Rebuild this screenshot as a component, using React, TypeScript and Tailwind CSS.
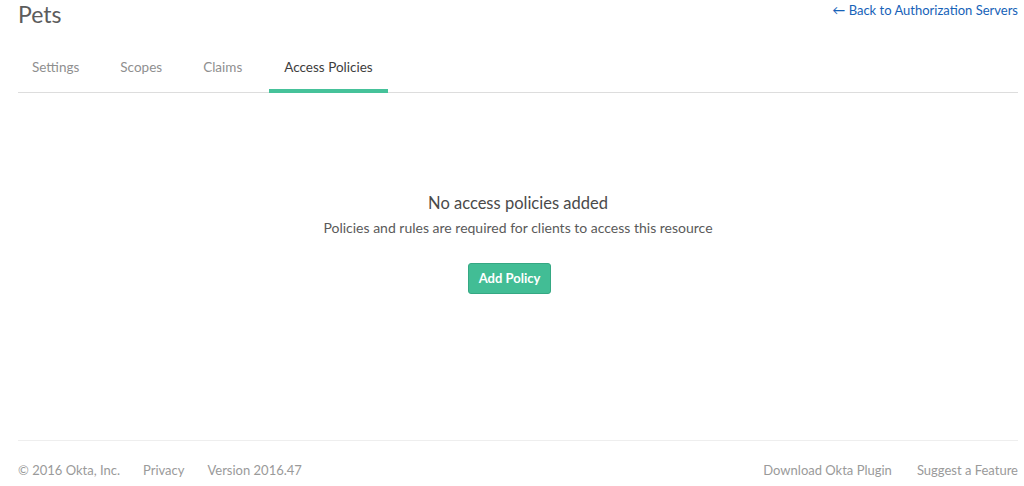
import React from 'react';

const tabs = ['Settings', 'Scopes', 'Claims', 'Access Policies'];

const App: React.FC = () => {
  const active = 'Access Policies';

  return (
    <div className="bg-white pl-[18px] pr-[6px] font-['Lato','Open_Sans',sans-serif] flex flex-col h-[486px]">
      {/* Header */}
      <div className="flex items-start justify-between">
        <h1 className="text-[23px] leading-[30px] text-[#5c5c5c] font-normal -mt-[1px]">Pets</h1>
        <a href="#" className="text-[13px] leading-5 text-[#1662b8]">
          ← Back to Authorization Servers
        </a>
      </div>

      {/* Tabs */}
      <div className="mt-[20px] flex gap-[13px] border-b border-[#dddddd]">
        {tabs.map((tab) => (
          <div
            key={tab}
            className={
              tab === active
                ? 'px-[15px] pt-[8px] pb-[12px] text-[13.5px] leading-5 text-[#3d3d3d] border-b-4 border-[#46c29a] -mb-[1px]'
                : 'px-[14px] pt-[8px] pb-[12px] text-[13.5px] leading-5 text-[#8f8f8f] border-b-4 border-transparent -mb-[1px]'
            }
          >
            {tab}
          </div>
        ))}
      </div>

      {/* Empty state */}
      <div className="flex-1 flex flex-col items-center pt-[98px]">
        <h2 className="text-[16.5px] leading-6 text-[#4a4a4a]">No access policies added</h2>
        <p className="mt-[3px] text-[14px] leading-5 text-[#5a5a5a]">
          Policies and rules are required for clients to access this resource
        </p>
        <button className="mt-[25px] mr-[17px] h-[31px] w-[83px] rounded-[3px] bg-[#42bd95] border border-[#35a883] text-white text-[13px] font-bold">
          Add Policy
        </button>
      </div>

      {/* Footer */}
      <footer className="border-t border-[#eeeeee] h-[46px] flex items-center justify-between text-[13px] text-[#9a9a9a]">
        <div className="flex gap-[23px] pt-[14px]">
          <span>© 2016 Okta, Inc.</span>
          <span>Privacy</span>
          <span>Version 2016.47</span>
        </div>
        <div className="flex gap-[25px] pt-[14px]">
          <span>Download Okta Plugin</span>
          <span>Suggest a Feature</span>
        </div>
      </footer>
    </div>
  );
};

export default App;
